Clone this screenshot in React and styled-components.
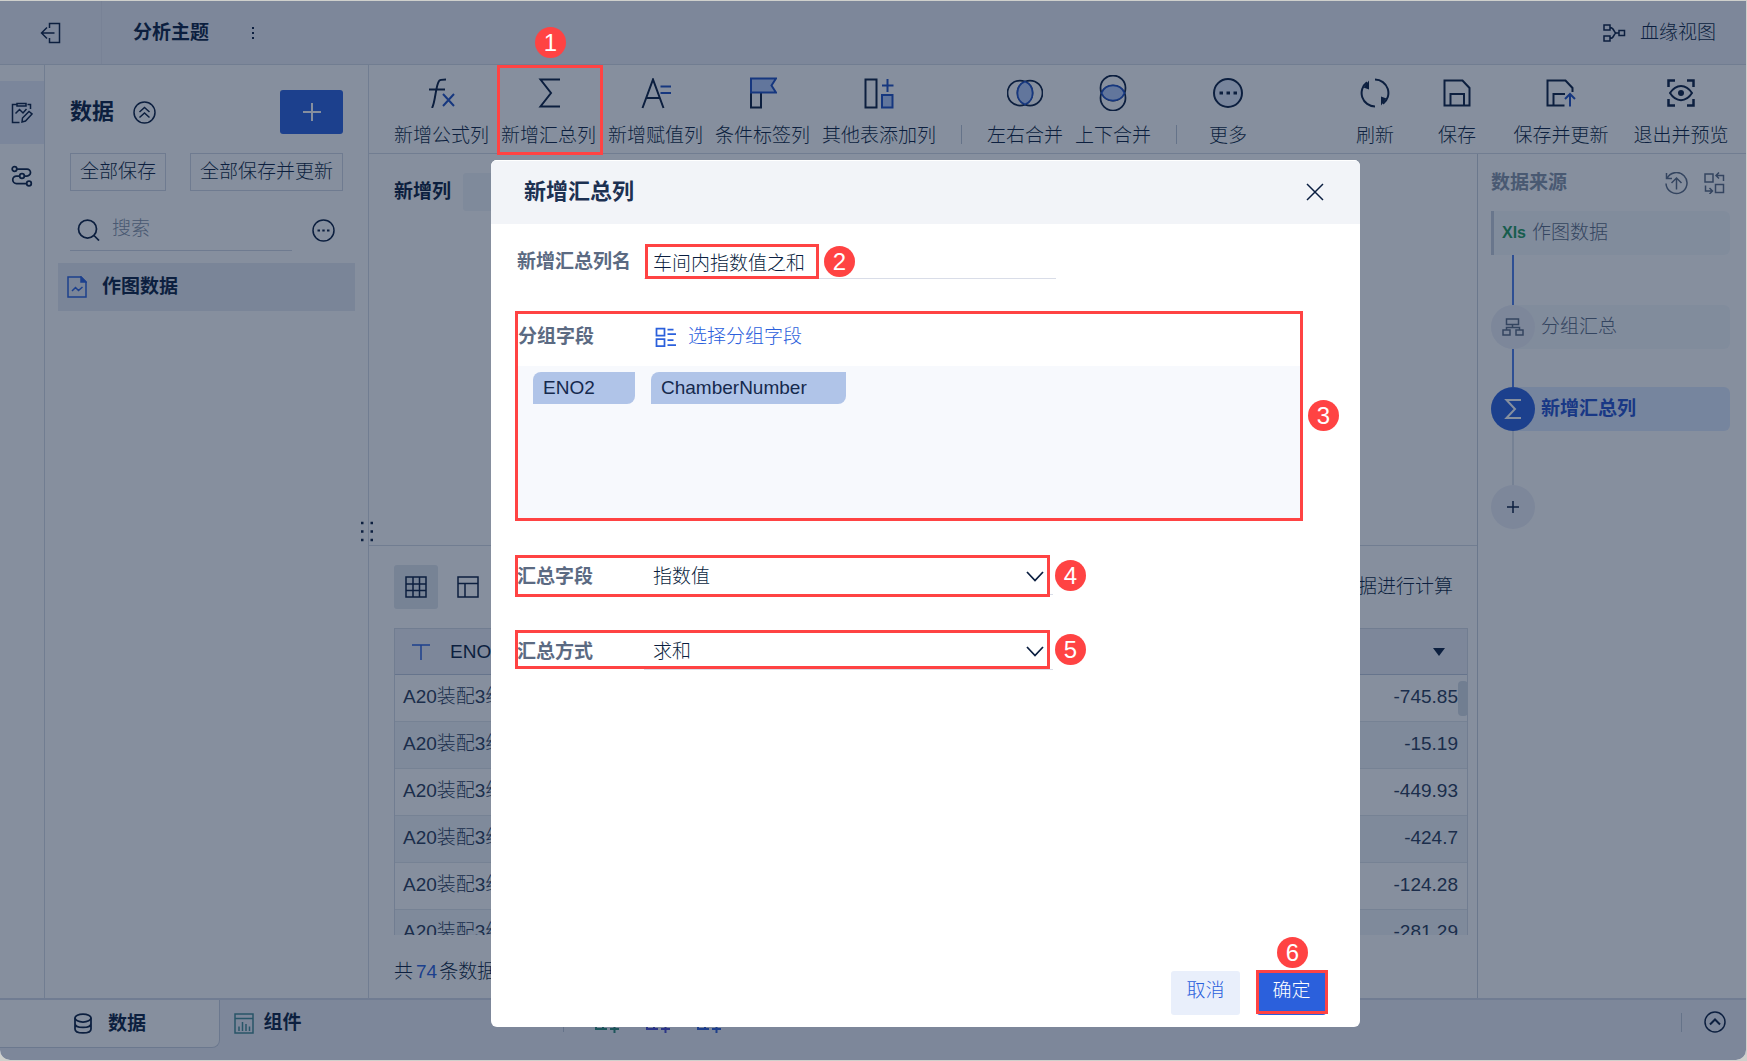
import React from 'react';
import styled, { createGlobalStyle, ThemeProvider } from 'styled-components';

const theme = {
  colors: {
    dark: '#0a1e40',
    body: '#2a3b58',
    label: '#5b6a82',
    muted: '#8592a6',
    primary: '#2b60dc',
    bar: '#edeff7',
    active: '#e7eaf3',
    line: '#d5dbe5',
    stripe: '#f1f5f8',
    danger: '#ff4343'
  }
};

const GlobalStyle = createGlobalStyle`
  * {
    box-sizing: border-box;
  }

  body {
    margin: 0;
    background: #cfd0cc;
    font-family: 'Liberation Sans', 'Noto Sans CJK SC', sans-serif;
    font-size: 19px;
    font-weight: 300;
    line-height: 28px;
    color: ${theme.colors.dark};
  }

  button, input, select {
    font: inherit;
    color: inherit;
  }
`;

const Viewport = styled.div`
  height: 100vh;
  padding: 1px 1px 1px 0;
`;

const Shell = styled.div`
  display: flex;
  flex-direction: column;
  position: relative;
  height: 100%;
  overflow: hidden;
  border-radius: 0 0 10px 10px;
  background: #fff;
`;

const PlainBtn = styled.button`
  display: flex;
  align-items: center;
  justify-content: center;
  padding: 0;
  border: none;
  background: none;
  white-space: nowrap;
  cursor: pointer;
`;

const Svg = styled.svg`
  display: block;
  flex: none;
  fill: none;
  stroke: currentColor;
  stroke-width: ${p => p.$stroke || 1.5};
`;

/* Top bar */

const TopBar = styled.header`
  display: flex;
  align-items: center;
  flex: none;
  height: 64px;
  background: ${p => p.theme.colors.bar};
  border-bottom: 1px solid ${p => p.theme.colors.line};
`;

const ExitCell = styled.div`
  display: flex;
  align-items: center;
  justify-content: center;
  align-self: stretch;
  width: 102px;
  border-right: 1px solid #e2e5ee;
`;

const Title = styled.h1`
  margin: 0 42px 0 31px;
  font-size: 19px;
  font-weight: 700;
`;

const Lineage = styled(PlainBtn)`
  gap: 14px;
  margin-left: auto;
  padding-right: 30px;
`;

/* Left side */

const Workspace = styled.div`
  display: flex;
  flex: 1;
  min-height: 0;
`;

const Rail = styled.nav`
  flex: none;
  width: 45px;
  padding-top: 16px;
  border-right: 1px solid ${p => p.theme.colors.line};
`;

const RailBtn = styled(PlainBtn)`
  width: 100%;
  height: 63px;
  background: ${p => (p.$active ? '#e9edf8' : 'none')};
`;

const Sidebar = styled.aside`
  flex: none;
  width: 324px;
  padding: 25px 13px 0;
  border-right: 1px solid ${p => p.theme.colors.line};
`;

const SideRow = styled.div`
  display: flex;
  align-items: center;
  justify-content: space-between;
  margin: 0 12px ${p => p.$bottom}px;
`;

const SideTitle = styled.h2`
  display: flex;
  align-items: center;
  gap: 19px;
  margin: 0;
  font-size: 22px;
  font-weight: 700;
`;

const AddBtn = styled(PlainBtn)`
  width: 63px;
  height: 44px;
  border-radius: 3px;
  color: #fff;
  background: ${p => p.theme.colors.primary};
`;

const OutlineBtn = styled(PlainBtn)`
  height: 38px;
  padding: 0 9px;
  border: 1px solid #d0d7e2;
`;

const Search = styled.label`
  display: flex;
  align-items: center;
  gap: 12px;
  width: 222px;
  height: 42px;
  padding-left: 7px;
  border-bottom: 1px solid #d0d7e2;
`;

const SearchInput = styled.input`
  width: 100%;
  min-width: 0;
  padding: 0 0 2px;
  border: none;
  outline: none;
  background: none;

  &::placeholder {
    color: ${p => p.theme.colors.muted};
    opacity: 1;
  }
`;

const OptionsBtn = styled(PlainBtn)`
  margin-right: 8px;
`;

const SideItem = styled(PlainBtn)`
  justify-content: flex-start;
  gap: 15px;
  width: 100%;
  height: 48px;
  padding-left: 9px;
  font-weight: 700;
  background: ${p => p.theme.colors.active};
`;

/* Toolbar */

const Main = styled.div`
  display: flex;
  flex-direction: column;
  flex: 1;
  min-width: 0;
`;

const Toolbar = styled.div`
  display: flex;
  flex: none;
  height: 89px;
  padding: 0 5px 0 25px;
  border-bottom: 1px solid ${p => p.theme.colors.line};
`;

const ToolGroup = styled.div`
  display: flex;
  gap: ${p => p.$gap || 0}px;
  margin-left: ${p => (p.$end ? 'auto' : '0')};
`;

const ToolBtn = styled(PlainBtn)`
  flex-direction: column;
  justify-content: flex-start;
  position: relative;
  min-width: ${p => p.$min || 0}px;
  padding-top: 10px;
`;

const ToolIcon = styled.span`
  display: flex;
  align-items: center;
  justify-content: center;
  height: 36px;
  margin-bottom: 11px;
`;

const Separator = styled.span`
  flex: none;
  width: 1px;
  height: 19px;
  margin: ${p => p.$margin};
  background: #bcc6d4;
`;

/* Work area */

const Columns = styled.div`
  display: flex;
  flex: 1;
  min-height: 0;
`;

const Content = styled.main`
  display: flex;
  flex-direction: column;
  flex: 1;
  min-width: 0;
`;

const Formula = styled.section`
  display: flex;
  flex: 1;
  align-items: flex-start;
  position: relative;
  min-height: 0;
  padding: 19px 25px;
`;

const FormulaTitle = styled.strong`
  margin-right: 12px;
  font-weight: 700;
  line-height: 38px;
`;

const FormulaChip = styled.span`
  width: 200px;
  height: 38px;
  border-radius: 3px;
  background: ${p => p.theme.colors.stripe};
`;

const DragHandle = styled.span`
  position: absolute;
  left: -10px;
  bottom: 3px;
`;

const Preview = styled.section`
  display: flex;
  flex-direction: column;
  flex: none;
  height: 453px;
  padding: 19px 9px 0 25px;
  border-top: 1px solid ${p => p.theme.colors.line};
`;

const PreviewBar = styled.div`
  display: flex;
  align-items: center;
  gap: 8px;
  margin: 0 15px 19px 0;
`;

const ViewBtn = styled(PlainBtn)`
  width: 44px;
  height: 44px;
  border-radius: 3px;
  background: ${p => (p.$active ? '#e0e6ed' : 'none')};
`;

const Hint = styled.span`
  margin-left: auto;
`;

const TableWrap = styled.div`
  flex: 1;
  position: relative;
  min-height: 0;
  overflow: hidden;
`;

const Table = styled.table`
  width: 100%;
  border: 1px solid ${p => p.theme.colors.line};
  border-spacing: 0;
  color: ${p => p.theme.colors.body};
`;

const HeadCell = styled.th`
  height: 46px;
  padding: 0 22px 0 17px;
  border-bottom: 1px solid #bfc8da;
  text-align: left;
  font-weight: 300;
  color: ${p => p.theme.colors.dark};
  background: ${p => p.theme.colors.bar};
`;

const HeadInner = styled.span`
  display: flex;
  align-items: center;
  justify-content: ${p => p.$justify || 'flex-start'};
  gap: 20px;
`;

const BodyRow = styled.tr`
  background: ${p => (p.$striped ? p.theme.colors.stripe : '#fff')};
`;

const Cell = styled.td`
  height: 47px;
  padding: 0 9px 2px 8px;
  border-bottom: 1px solid #dfe4eb;
  text-align: ${p => p.$align || 'left'};
`;

const ScrollThumb = styled.span`
  position: absolute;
  top: 53px;
  right: 0;
  width: 10px;
  height: 35px;
  border-radius: 4px;
  background: #d5dce5;
`;

const Total = styled.p`
  flex: none;
  height: 63px;
  margin: 0;
  line-height: 74px;
`;

const TotalNum = styled.span`
  margin: 0 2px 0 3px;
  color: ${p => p.theme.colors.primary};
`;

/* Data source steps */

const Steps = styled.aside`
  flex: none;
  width: 269px;
  padding: 10px 16px 0 13px;
  border-left: 1px solid #c8d0dc;
`;

const StepsHead = styled.div`
  display: flex;
  align-items: center;
  gap: 16px;
  height: 38px;
  margin-bottom: 9px;
  padding-right: 5px;
  color: ${p => p.theme.colors.label};
`;

const StepsTitle = styled.strong`
  margin-right: auto;
  font-weight: 700;
  color: ${p => p.theme.colors.muted};
`;

const Step = styled(PlainBtn)`
  justify-content: flex-start;
  gap: 6px;
  width: 100%;
  height: 44px;
  padding-left: ${p => (p.$source ? 8 : 0)}px;
  border-left: ${p => (p.$source ? '3px solid #c5cddb' : 'none')};
  border-radius: ${p => (p.$source ? '0 6px 6px 0' : '22px 6px 6px 22px')};
  color: ${p => (p.$active ? '#2450cd' : p.theme.colors.label)};
  font-weight: ${p => (p.$active ? 700 : 300)};
  background: ${p => (p.$active ? '#dfebff' : '#f5f8fb')};
`;

const StepDot = styled.span`
  display: flex;
  align-items: center;
  justify-content: center;
  flex: none;
  width: 44px;
  height: 44px;
  border-radius: 50%;
  color: ${p => (p.$active ? '#fff' : 'inherit')};
  background: ${p => (p.$active ? '#2b60dc' : p.theme.colors.bar)};
`;

const StepLine = styled.div`
  width: 2px;
  height: ${p => p.$height}px;
  margin-left: 21px;
  background: ${p => (p.$pending ? '#dde3ea' : '#4e7ee8')};
`;

const AddStep = styled(PlainBtn)`
  width: 44px;
  height: 44px;
  border-radius: 50%;
  background: ${p => p.theme.colors.bar};
`;

const XlsMark = styled.span`
  width: 24px;
  font-size: 16px;
  font-weight: 700;
  color: #229a5c;
`;

/* Bottom tabs */

const BottomBar = styled.footer`
  display: flex;
  align-items: flex-start;
  flex: none;
  height: 62px;
  border-top: 2px solid #d2d8e6;
  background: ${p => p.theme.colors.bar};
`;

const Tab = styled(PlainBtn)`
  gap: ${p => (p.$active ? 15 : 9)}px;
  width: ${p => (p.$active ? 220 : 96)}px;
  height: ${p => (p.$active ? 48 : 46)}px;
  border-right: ${p => (p.$active ? '1px solid #c9d0de' : 'none')};
  border-bottom: ${p => (p.$active ? '1px solid #c9d0de' : 'none')};
  border-radius: 0 0 8px 0;
  font-weight: 700;
  background: ${p => (p.$active ? '#fff' : 'none')};
`;

const InsertTools = styled.div`
  display: flex;
  align-items: center;
  gap: 27px;
  height: 44px;
  margin-left: 247px;
`;

const BottomEnd = styled.div`
  display: flex;
  align-items: center;
  height: 44px;
  margin-left: auto;
  padding-right: 20px;
`;

/* Dialog */

const Mask = styled.div`
  display: flex;
  justify-content: center;
  position: absolute;
  inset: 0;
  z-index: 1;
  padding: 159px 0 33px 105px;
  background: rgba(13, 31, 61, 0.5);
`;

const Dialog = styled.section`
  display: flex;
  flex-direction: column;
  flex: 0 1 869px;
  overflow: hidden;
  border-radius: 6px;
  background: #fff;
`;

const DialogHead = styled.header`
  display: flex;
  align-items: center;
  justify-content: space-between;
  flex: none;
  height: 64px;
  padding: 0 36px 2px 33px;
  border-top: 1px solid #fff;
  background: #f2f4f8;
`;

const DialogTitle = styled.h2`
  margin: 0;
  font-size: 22px;
  font-weight: 700;
  color: #1d3152;
`;

const DialogBody = styled.div`
  flex: 1;
  padding: 21px 57px 0 24px;
`;

const Field = styled.div`
  display: flex;
  align-items: center;
  position: relative;
  width: ${p => p.$width}px;
  max-width: 100%;
  height: ${p => p.$height}px;
  margin-bottom: ${p => p.$bottom}px;
  padding: ${p => (p.$select ? 4 : 0)}px 0 0 2px;
`;

const Label = styled.label`
  flex: none;
  width: 127px;
  font-weight: 700;
  color: ${p => p.theme.colors.label};
`;

const ControlBox = styled.div`
  flex: 1;
  position: relative;
  height: 100%;
`;

const TextInput = styled.input`
  width: 100%;
  height: 100%;
  padding: 0 9px;
  border: none;
  border-bottom: 1px solid #d9dde8;
  outline: none;
  background: none;
`;

const Select = styled.select`
  appearance: none;
  width: 100%;
  height: 100%;
  padding: 0 40px 0 9px;
  border: none;
  border-bottom: 1px solid #d9dde8;
  outline: none;
  background: none;
`;

const Chevron = styled.span`
  position: absolute;
  top: 12px;
  right: 9px;
  pointer-events: none;
`;

const Group = styled.div`
  position: relative;
  margin-bottom: 34px;
  padding: 0 0 3px 3px;
`;

const GroupHead = styled.div`
  display: flex;
  align-items: center;
  height: 55px;
  padding-bottom: 4px;
`;

const GroupLink = styled(PlainBtn)`
  gap: 11px;
  margin-left: 10px;
  color: ${p => p.theme.colors.primary};
`;

const ChipPanel = styled.div`
  display: flex;
  flex-wrap: wrap;
  align-content: flex-start;
  gap: 16px;
  height: 152px;
  padding: 6px 15px;
  background: #f7f9fd;
`;

const Chip = styled.span`
  min-width: ${p => p.$min}px;
  padding: 0 10px;
  line-height: 32px;
  border-radius: 8px 0;
  color: #15294d;
  background: #b0c4e8;
`;

const DialogFoot = styled.footer`
  display: flex;
  justify-content: flex-end;
  gap: 17px;
  padding: 0 34px 12px;
`;

const FootBtn = styled(PlainBtn)`
  position: relative;
  width: 69px;
  height: 44px;
  padding-bottom: 4px;
  border-radius: 3px;
  color: ${p => (p.$primary ? '#fff' : p.theme.colors.primary)};
  background: ${p => (p.$primary ? p.theme.colors.primary : '#e9effb')};
`;

/* Guide marks drawn over the page */

const MarkFrame = styled.span`
  position: absolute;
  inset: ${p => p.$inset || '0'};
  z-index: 2;
  width: ${p => (p.$width ? `${p.$width}px` : 'auto')};
  border: 3px solid ${p => p.theme.colors.danger};
  pointer-events: none;
`;

const badgeSpots = {
  top: 'bottom: calc(100% + 5px); left: calc(50% - 15px);',
  above: 'bottom: calc(100% + 10px); left: calc(50% - 15px);',
  right: 'left: calc(100% + 8px); top: calc(50% - 16px);'
};

const Badge = styled.span`
  display: flex;
  align-items: center;
  justify-content: center;
  position: absolute;
  ${p => badgeSpots[p.$side]}
  width: 31px;
  height: 31px;
  border-radius: 50%;
  font-size: 24px;
  font-weight: 300;
  line-height: 31px;
  color: #fff;
  background: ${p => p.theme.colors.danger};
`;

function Mark({ step, side = 'right', inset, width }) {
  return (
    <MarkFrame $inset={inset} $width={width}>
      <Badge $side={side}>{step}</Badge>
    </MarkFrame>
  );
}

/* Icons */

function Icon({ w = 24, h = w, stroke, children, ...rest }) {
  return (
    <Svg
      width={w}
      height={h}
      viewBox={`0 0 ${w} ${h}`}
      $stroke={stroke}
      aria-hidden="true"
      {...rest}
    >
      {children}
    </Svg>
  );
}

const BLUE = '#1f4fc0';
const FILL = '#b6cdfa';

const ExitIcon = () => (
  <Icon w={22}>
    <path d="M9.5 6V1.5h10v19h-10V16M1.5 11h13M7 5.5 1.5 11 7 16.5" />
  </Icon>
);

const DotsIcon = () => (
  <Icon w={4} h={16}>
    <path d="M1 3h2M1 8h2M1 13h2" strokeWidth="2" />
  </Icon>
);

const LineageIcon = () => (
  <Icon w={24} h={20}>
    <path d="M2 2h6v5H2zM2 13h6v5H2zM17 7.500h5.500v5H17zM8 4.500c5 0 3 5.500 6.500 5.500H17M8 15.500c5 0 3-5.500 6.500-5.500" />
  </Icon>
);

const ClipIcon = () => (
  <Icon w={22}>
    <path d="M5.500 2.500h-4v18h7M16.500 2.500h3V7M6 1.500h9v2.500H6zM4.500 11.500l4-4 3.500 3.500L15.500 7" />
    <path d="m11 20 .5-4 6.500-6.500 3 2.500-6.500 7z" />
  </Icon>
);

const FlowIcon = () => (
  <Icon w={22} stroke={1.75}>
    <circle cx="3.500" cy="4" r="2.300" />
    <circle cx="11" cy="11" r="2.300" />
    <circle cx="18" cy="18.500" r="2.300" />
    <path d="M6 4h10a3.500 3.500 0 0 1 0 7h-2.500M8.500 11H5.500a3.700 3.700 0 0 0 0 7.500h10" />
  </Icon>
);

const CollapseIcon = () => (
  <Icon w={23}>
    <circle cx="11.500" cy="11.500" r="10.500" />
    <path d="m6.500 11 5-4.500 5 4.500M6.500 16.500l5-4.500 5 4.500" />
  </Icon>
);

const PlusIcon = ({ size = 18, stroke = 2 }) => (
  <Icon w={size} stroke={stroke}>
    <path d={`M${size / 2} 0v${size}M0 ${size / 2}h${size}`} />
  </Icon>
);

const SearchIcon = () => (
  <Icon w={23} stroke={1.75}>
    <circle cx="10.500" cy="11" r="9" />
    <path d="m17 17.500 5 5" />
  </Icon>
);

const MoreCircleIcon = () => (
  <Icon w={23}>
    <circle cx="11.500" cy="11.500" r="10.500" />
    <path d="M5.500 11.500H8M10.300 11.500h2.400M15 11.500h2.500" strokeWidth="2.2" />
  </Icon>
);

const FileIcon = () => (
  <Icon w={20} h={22}>
    <g stroke={theme.colors.primary}>
      <path d="M1 1h13l5 5v15H1z" />
      <path d="M14 1v5h5z" fill={theme.colors.primary} />
      <path d="m5 15 3.500-3.500 3 3L15.500 11" />
    </g>
  </Icon>
);

const FxIcon = () => (
  <Icon w={28} h={30} stroke={2}>
    <path d="M4 30c3.500-6 3.500-22 7-27 1-1.500 3-1.500 7-1.500M1 11.500h16" />
    <path d="m15 16 11 12M26 16 15 28" stroke={BLUE} />
  </Icon>
);

const SigmaIcon = ({ w = 22, h = 30, stroke = 2 }) => (
  <Svg width={w} height={h} viewBox="0 0 22 30" $stroke={stroke} aria-hidden="true">
    <path d="M22 1.500H2.500L13 15 2.500 28.500H22" />
  </Svg>
);

const SmallSigmaIcon = () => (
  <Icon w={18} h={20} stroke={2}>
    <path d="M17 1H2.500l8.500 9-8.500 9H17" />
  </Icon>
);

const AssignIcon = () => (
  <Icon w={30} h={31} stroke={2}>
    <path d="M1.500 30 12 1.500 22.500 30M5 20h14" />
    <path d="M19.500 8.500H30M19.500 15H30" stroke={BLUE} />
  </Icon>
);

const FlagIcon = () => (
  <Icon w={28} h={32} stroke={2}>
    <path d="M2 16v14.500h10V16" />
    <path d="M2 1.500h25l-4.500 7 4.500 7H2z" stroke={BLUE} fill={FILL} />
  </Icon>
);

const AddTableIcon = () => (
  <Icon w={30} h={31} stroke={2}>
    <path d="M1.500 1.500h11v28h-11z" />
    <path d="M23.500 1v13M18 7.500h11.500" stroke={BLUE} />
    <path d="M18 17h10.500v12.500H18z" stroke={BLUE} fill={FILL} />
  </Icon>
);

const JoinIcon = () => (
  <Icon w={36} h={28} stroke={1.75}>
    <circle cx="13" cy="14" r="12.500" />
    <circle cx="23" cy="14" r="12.500" />
    <path
      d="M18 2.500a12.500 12.500 0 0 1 0 23 12.500 12.500 0 0 1 0-23z"
      stroke={BLUE}
      fill={FILL}
    />
  </Icon>
);

const UnionIcon = () => (
  <Icon w={28} h={36} stroke={1.75}>
    <circle cx="14" cy="13" r="12.500" />
    <circle cx="14" cy="23" r="12.500" />
    <path
      d="M2.500 18a12.500 12.500 0 0 1 23 0 12.500 12.500 0 0 1-23 0z"
      stroke={BLUE}
      fill={FILL}
    />
  </Icon>
);

const MoreToolIcon = () => (
  <Icon w={32} stroke={2}>
    <circle cx="16" cy="16" r="14" fill="#e3eafb" />
    <path d="M7.500 16H11M14.500 16H18M21.500 16H25" strokeWidth="3.2" />
  </Icon>
);

const RefreshIcon = () => (
  <Icon w={30} stroke={2}>
    <path d="M15 28.500A13.500 13.500 0 0 1 7 4.200M15 1.500a13.500 13.500 0 0 1 8 24.300" />
    <path d="M9 2.500v9L3.500 9.500zM21 27.500v-9l5.500 2z" fill="currentColor" stroke="none" />
  </Icon>
);

const SaveIcon = () => (
  <Icon w={28} stroke={2}>
    <path d="M1.500 1.500h18l7 7.500v17.500h-25zM7.500 26.500V15h13.500v11.500" />
  </Icon>
);

const SaveUpdateIcon = () => (
  <Icon w={30} h={28} stroke={2}>
    <path d="M26.500 13V9l-7-7.500h-18v25h17M7.500 26.500V15H19" />
    <path d="M24 27.500V15.500M19 20l5-5 5 5" stroke={BLUE} />
  </Icon>
);

const PreviewIcon = () => (
  <Icon w={28} stroke={2}>
    <path d="M1.500 8V1.500H8M20 1.500h6.500V8M26.500 20v6.500H20M8 26.500H1.500V20" strokeWidth="2.5" />
    <path d="M3 14c6-9.500 16-9.500 22 0-6 9.500-16 9.500-22 0z" />
    <circle cx="14" cy="14" r="3" fill="currentColor" stroke="none" />
  </Icon>
);

const HandleIcon = () => (
  <Icon w={14} h={22}>
    <path d="M2 3h2.500M11.500 3H14M2 11.500h2.500M11.500 11.500H14M2 20h2.500M11.500 20H14" strokeWidth="2.5" />
  </Icon>
);

const GridIcon = () => (
  <Icon w={22}>
    <path d="M1 1h20v20H1zM1 8h20M1 14.500h20M8 1v20M14.500 1v20" />
  </Icon>
);

const LayoutIcon = () => (
  <Icon w={22}>
    <path d="M1 1h20v20H1zM1 7.500h20M8 7.500V21" />
  </Icon>
);

const TextTypeIcon = () => (
  <Icon w={18} h={16}>
    <path d="M0 1h18M9 1v15" stroke={theme.colors.primary} />
  </Icon>
);

const CaretIcon = () => (
  <Icon w={12} h={8}>
    <path d="M0 0h12L6 8z" fill="currentColor" stroke="none" />
  </Icon>
);

const RestoreIcon = () => (
  <Icon w={23}>
    <path d="M1.500 1v5.500H7M2 6.500A10.500 10.500 0 1 1 1 11.500M11.500 17.500V6.500M6.500 11l5-5 5 5" />
  </Icon>
);

const SwapIcon = () => (
  <Icon w={21} h={22}>
    <path d="M1 2h8v8H1zM11.500 12.500h8v8h-8zM12 3.500h7.500V9M15 .5l-3 3 3 3M1.500 13.500V19H8M5.500 16l3 3-3 3" />
  </Icon>
);

const GroupIcon = () => (
  <Icon w={22} h={18}>
    <path d="M4.500 1h12v5.500h-12zM1 12h7v5H1zM14 12h7v5h-7zM10.500 6.500v3M4.500 12V9.500h13V12" />
  </Icon>
);

const DatabaseIcon = () => (
  <Icon w={20} h={21} stroke={1.75}>
    <ellipse cx="10" cy="5" rx="8" ry="4" />
    <path d="M2 5v11c0 5.300 16 5.300 16 0V5M2 10.500c0 5.300 16 5.300 16 0" />
  </Icon>
);

const ChartTabIcon = () => (
  <Icon w={20} h={21}>
    <path
      d="M1 1h18v19H1zM1 5.500h18M5 18v-4.500M8.500 18v-9M12 18v-7M15.500 18v-4.500"
      stroke="#418a92"
    />
  </Icon>
);

const InsertIcon = ({ color }) => (
  <Icon w={24} h={22}>
    <path
      d="M12 18H1V2h20v9M1 7h20M8 7v11M19.500 13v9M15 18h9"
      stroke={color}
      strokeWidth="2"
    />
  </Icon>
);

const UpIcon = () => (
  <Icon w={22}>
    <circle cx="11" cy="11" r="10" />
    <path d="m6 13.500 5-5 5 5" strokeWidth="2" />
  </Icon>
);

const CloseIcon = () => (
  <Icon w={18}>
    <path d="m1 1 16 16M17 1 1 17" />
  </Icon>
);

const ChevronIcon = () => (
  <Icon w={18} h={11} stroke={1.75}>
    <path d="m1 1 8 8.500L17 1" />
  </Icon>
);

const FieldsIcon = () => (
  <Icon w={22} h={20} stroke={1.75}>
    <path d="M1.500 1.500h8v7h-8zM1.500 12h8v7h-8zM12.500 2.500h6M12.500 7H21M12.500 13h6M12.500 18H21" />
  </Icon>
);

/* Page parts */

const columnTools = [
  { text: '新增公式列', icon: <FxIcon /> },
  { text: '新增汇总列', icon: <SigmaIcon />, step: 1 },
  { text: '新增赋值列', icon: <AssignIcon /> },
  { text: '条件标签列', icon: <FlagIcon /> },
  { text: '其他表添加列', icon: <AddTableIcon /> }
];

const mergeTools = [
  { text: '左右合并', icon: <JoinIcon /> },
  { text: '上下合并', icon: <UnionIcon /> }
];

const pageTools = [
  { text: '刷新', icon: <RefreshIcon />, min: 76 },
  { text: '保存', icon: <SaveIcon />, min: 88 },
  { text: '保存并更新', icon: <SaveUpdateIcon />, min: 120 },
  { text: '退出并预览', icon: <PreviewIcon />, min: 120 }
];

const amounts = ['-745.85', '-15.19', '-449.93', '-424.7', '-124.28', '-281.29'];

function Tool({ text, icon, step, min }) {
  return (
    <ToolBtn type="button" $min={min}>
      <ToolIcon>{icon}</ToolIcon>
      {text}
      {step && <Mark step={step} side="above" inset="0 -7px -2px -4px" />}
    </ToolBtn>
  );
}

function SidePanel() {
  return (
    <Sidebar>
      <SideRow $bottom={19}>
        <SideTitle>
          数据
          <CollapseIcon />
        </SideTitle>
        <AddBtn type="button">
          <PlusIcon />
        </AddBtn>
      </SideRow>
      <SideRow $bottom={18}>
        <OutlineBtn type="button">全部保存</OutlineBtn>
        <OutlineBtn type="button">全部保存并更新</OutlineBtn>
      </SideRow>
      <SideRow $bottom={12}>
        <Search>
          <SearchIcon />
          <SearchInput placeholder="搜索" />
        </Search>
        <OptionsBtn type="button">
          <MoreCircleIcon />
        </OptionsBtn>
      </SideRow>
      <SideItem type="button">
        <FileIcon />
        作图数据
      </SideItem>
    </Sidebar>
  );
}

function PreviewPanel() {
  return (
    <Preview>
      <PreviewBar>
        <ViewBtn type="button" $active>
          <GridIcon />
        </ViewBtn>
        <ViewBtn type="button">
          <LayoutIcon />
        </ViewBtn>
        <Hint>数据进行计算</Hint>
      </PreviewBar>
      <TableWrap>
        <Table>
          <thead>
            <tr>
              <HeadCell>
                <HeadInner>
                  <TextTypeIcon />
                  ENO2
                </HeadInner>
              </HeadCell>
              <HeadCell>
                <HeadInner $justify="flex-end">
                  <CaretIcon />
                </HeadInner>
              </HeadCell>
            </tr>
          </thead>
          <tbody>
            {amounts.map((amount, i) => (
              <BodyRow key={amount} $striped={i % 2 === 1}>
                <Cell>A20装配3组</Cell>
                <Cell $align="right">{amount}</Cell>
              </BodyRow>
            ))}
          </tbody>
        </Table>
        <ScrollThumb />
      </TableWrap>
      <Total>
        共<TotalNum>74</TotalNum>条数据
      </Total>
    </Preview>
  );
}

function StepsPanel() {
  return (
    <Steps>
      <StepsHead>
        <StepsTitle>数据来源</StepsTitle>
        <RestoreIcon />
        <SwapIcon />
      </StepsHead>
      <Step type="button" $source>
        <XlsMark>Xls</XlsMark>
        作图数据
      </Step>
      <StepLine $height={50} />
      <Step type="button">
        <StepDot>
          <GroupIcon />
        </StepDot>
        分组汇总
      </Step>
      <StepLine $height={38} />
      <Step type="button" $active>
        <StepDot $active>
          <SmallSigmaIcon />
        </StepDot>
        新增汇总列
      </Step>
      <StepLine $height={54} $pending />
      <AddStep type="button">
        <PlusIcon size={12} stroke={1.5} />
      </AddStep>
    </Steps>
  );
}

function SummaryDialog() {
  return (
    <Dialog role="dialog" aria-labelledby="dialog-title">
      <DialogHead>
        <DialogTitle id="dialog-title">新增汇总列</DialogTitle>
        <PlainBtn type="button">
          <CloseIcon />
        </PlainBtn>
      </DialogHead>
      <DialogBody>
        <Field $width={541} $height={34} $bottom={32}>
          <Label htmlFor="column-name">新增汇总列名</Label>
          <ControlBox>
            <TextInput id="column-name" defaultValue="车间内指数值之和" />
            <Mark step={2} inset="-1px auto 0 1px" width={174} />
          </ControlBox>
        </Field>
        <Group>
          <GroupHead>
            <Label as="span">分组字段</Label>
            <GroupLink type="button">
              <FieldsIcon />
              选择分组字段
            </GroupLink>
          </GroupHead>
          <ChipPanel>
            <Chip $min={102}>ENO2</Chip>
            <Chip $min={195}>ChamberNumber</Chip>
          </ChipPanel>
          <Mark step={3} />
        </Group>
        <Field $select $width={538} $height={40} $bottom={35}>
          <Label htmlFor="sum-field">汇总字段</Label>
          <ControlBox>
            <Select id="sum-field">
              <option>指数值</option>
            </Select>
            <Chevron>
              <ChevronIcon />
            </Chevron>
          </ControlBox>
          <Mark step={4} inset="0 3px -2px 0" />
        </Field>
        <Field $select $width={538} $height={40} $bottom={0}>
          <Label htmlFor="sum-mode">汇总方式</Label>
          <ControlBox>
            <Select id="sum-mode">
              <option>求和</option>
            </Select>
            <Chevron>
              <ChevronIcon />
            </Chevron>
          </ControlBox>
          <Mark step={5} inset="0 3px 1px 0" />
        </Field>
      </DialogBody>
      <DialogFoot>
        <FootBtn type="button">取消</FootBtn>
        <FootBtn type="button" $primary>
          确定
          <Mark step={6} side="top" inset="-1px -2px 1px -1px" />
        </FootBtn>
      </DialogFoot>
    </Dialog>
  );
}

export default function App() {
  return (
    <ThemeProvider theme={theme}>
      <GlobalStyle />
      <Viewport>
        <Shell>
          <TopBar>
            <ExitCell>
              <PlainBtn type="button">
                <ExitIcon />
              </PlainBtn>
            </ExitCell>
            <Title>分析主题</Title>
            <PlainBtn type="button">
              <DotsIcon />
            </PlainBtn>
            <Lineage type="button">
              <LineageIcon />
              血缘视图
            </Lineage>
          </TopBar>
          <Workspace>
            <Rail>
              <RailBtn type="button" $active>
                <ClipIcon />
              </RailBtn>
              <RailBtn type="button">
                <FlowIcon />
              </RailBtn>
            </Rail>
            <SidePanel />
            <Main>
              <Toolbar>
                <ToolGroup $gap={12}>
                  {columnTools.map(tool => (
                    <Tool key={tool.text} {...tool} />
                  ))}
                </ToolGroup>
                <Separator $margin="60px 25px 0" />
                <ToolGroup $gap={12}>
                  {mergeTools.map(tool => (
                    <Tool key={tool.text} {...tool} />
                  ))}
                </ToolGroup>
                <Separator $margin="60px 32px 0 25px" />
                <Tool text="更多" icon={<MoreToolIcon />} />
                <ToolGroup $end>
                  {pageTools.map(tool => (
                    <Tool key={tool.text} {...tool} />
                  ))}
                </ToolGroup>
              </Toolbar>
              <Columns>
                <Content>
                  <Formula>
                    <FormulaTitle>新增列</FormulaTitle>
                    <FormulaChip />
                    <DragHandle>
                      <HandleIcon />
                    </DragHandle>
                  </Formula>
                  <PreviewPanel />
                </Content>
                <StepsPanel />
              </Columns>
            </Main>
          </Workspace>
          <BottomBar>
            <Tab type="button" $active>
              <DatabaseIcon />
              数据
            </Tab>
            <Tab type="button">
              <ChartTabIcon />
              组件
            </Tab>
            <InsertTools>
              <Separator $margin="0 4px 0 0" />
              <InsertIcon color="#2c8a78" />
              <InsertIcon color="#4a4ad0" />
              <InsertIcon color="#2f5fd8" />
            </InsertTools>
            <BottomEnd>
              <Separator $margin="0 22px 0 0" />
              <PlainBtn type="button">
                <UpIcon />
              </PlainBtn>
            </BottomEnd>
          </BottomBar>
          <Mask>
            <SummaryDialog />
          </Mask>
        </Shell>
      </Viewport>
    </ThemeProvider>
  );
}
